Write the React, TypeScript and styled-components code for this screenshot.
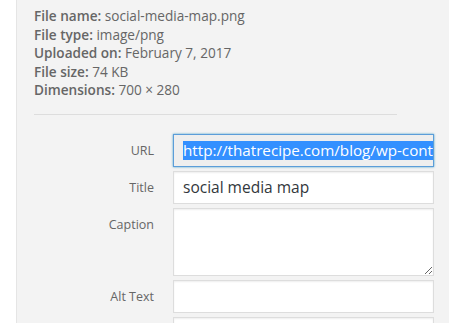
import React from "react";
import styled, { createGlobalStyle } from "styled-components";

const Global = createGlobalStyle`
  html, body { margin: 0; padding: 0; background: #fff; }
  body { font-family: "Open Sans", "Noto Sans", sans-serif; }
`;

const Page = styled.div`
  display: flex;
  width: 449px;
  height: 323px;
  overflow: hidden;
`;

const Gutter = styled.div`
  width: 16px;
  flex: none;
  background: #fff;
`;

const Panel = styled.div`
  flex: 1;
  background: #f3f3f3;
  padding: 7px 0 0 17px;
  border-left: 1px solid #e5e5e5;
  box-sizing: border-box;
`;

const Details = styled.div`
  display: flex;
  flex-direction: column;
  font-size: 13.6px;
  line-height: 18.5px;
  color: #666;
`;

const Line = styled.div`
  white-space: nowrap;
  strong { font-weight: 600; }
`;

const Divider = styled.hr`
  border: 0;
  border-top: 1px solid #ddd;
  margin: 14px 0 0 0;
  width: 363px;
`;

const Form = styled.div`
  display: grid;
  grid-template-columns: 120px 261px;
  column-gap: 19px;
  row-gap: 4px;
  margin-top: 19px;
`;

const Label = styled.div<{ $top?: boolean }>`
  text-align: right;
  font-size: 12.5px;
  color: #666;
  padding-top: ${(p) => (p.$top ? "8px" : "0")};
  align-self: ${(p) => (p.$top ? "start" : "center")};
`;

const Field = styled.div<{ $focus?: boolean; $readonly?: boolean }>`
  box-sizing: border-box;
  height: 33px;
  border: 1px solid ${(p) => (p.$focus ? "#5b9dd9" : "#ddd")};
  box-shadow: ${(p) =>
    p.$focus ? "0 0 2px rgba(30,140,190,0.8)" : "inset 0 1px 2px rgba(0,0,0,0.07)"};
  background: ${(p) => (p.$readonly ? "#eee" : "#fff")};
  padding: 0 8px 0 9px;
  display: flex;
  align-items: center;
  overflow: hidden;
  white-space: nowrap;
  font-size: 15.5px;
  color: #32373c;
`;

const Selected = styled.span`
  background: #3390ff;
  color: #fff;
  line-height: 19px;
  font-size: 15.2px;
`;

const Area = styled.textarea`
  box-sizing: border-box;
  height: 68px;
  width: 100%;
  border: 1px solid #ddd;
  box-shadow: inset 0 1px 2px rgba(0,0,0,0.07);
  background: #fff;
  resize: vertical;
  margin: 0;
  padding: 6px 8px;
  font: inherit;
  outline: none;
  display: block;
`;

export default function App() {
  return (
    <>
      <Global />
      <Page>
        <Gutter />
        <Panel>
          <Details>
            <Line><strong>File name:</strong> social-media-map.png</Line>
            <Line><strong>File type:</strong> image/png</Line>
            <Line><strong>Uploaded on:</strong> February 7, 2017</Line>
            <Line><strong>File size:</strong> 74 KB</Line>
            <Line><strong>Dimensions:</strong> 700 × 280</Line>
          </Details>
          <Divider />
          <Form>
            <Label>URL</Label>
            <Field $focus $readonly>
              <Selected>http://thatrecipe.com/blog/wp-content/uploads/2017/02/social-media-map.png</Selected>
            </Field>
            <Label>Title</Label>
            <Field>social media map</Field>
            <Label $top>Caption</Label>
            <Area />
            <Label>Alt Text</Label>
            <Field />
            <Label />
            <Field />
          </Form>
        </Panel>
      </Page>
    </>
  );
}
